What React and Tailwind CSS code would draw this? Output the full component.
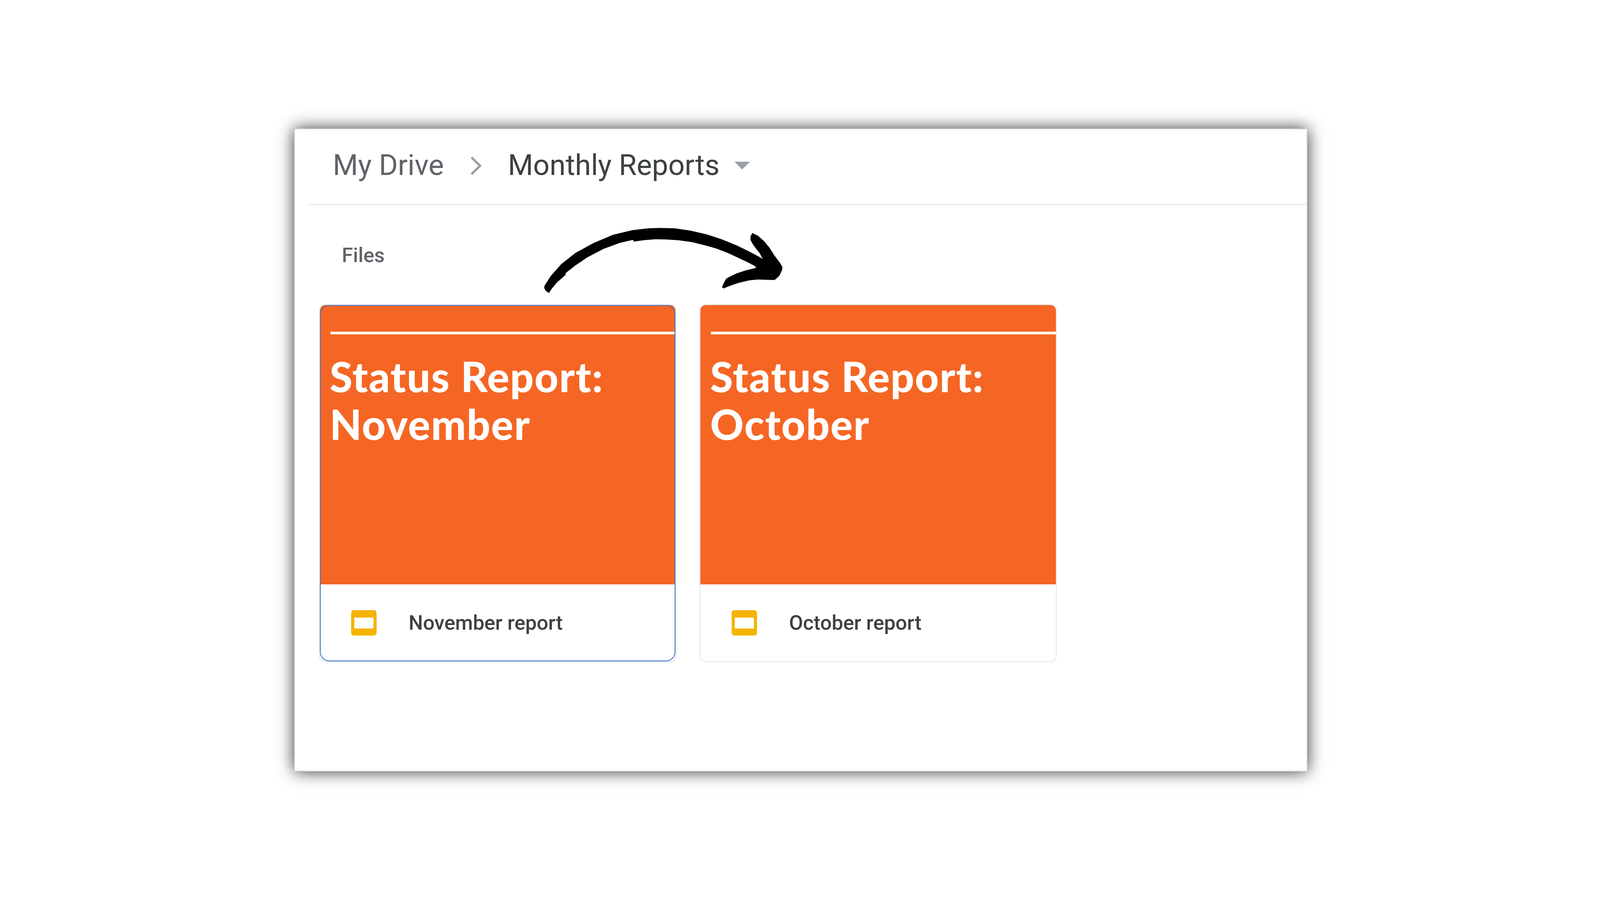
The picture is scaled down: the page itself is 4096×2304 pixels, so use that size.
import React from 'react';

const ARROW = "M120 825 L108 810 L100 795 L93 770 L95 745 L130 640 L190 510 L270 390 L370 285 L480 195 L590 145 L680 125 L745 120 L830 125 L920 150 L1010 190 L1090 240 L1180 310 L1250 375 L1318 445 L1327 458 L1310 395 L1285 335 L1270 295 L1258 250 L1257 215 L1268 175 L1300 205 L1335 265 L1365 335 L1395 425 L1425 500 L1438 545 L1435 580 L1420 640 L1405 665 L1395 682 L1380 683 L1300 678 L1250 688 L1190 715 L1140 748 L1105 775 L1097 765 L1100 745 L1110 705 L1118 675 L1130 658 L1180 612 L1230 580 L1285 555 L1290 545 L1275 525 L1245 495 L1190 445 L1130 392 L1065 343 L1000 308 L930 275 L850 253 L780 245 L720 243 L660 252 L596 268 L598 255 L592 250 L520 282 L430 345 L335 440 L270 525 L230 585 L213 612 L215 625 L195 660 L165 710 L135 780 Z";

function ReportCard({ month, name, selected }) {
  return (
    <div className="relative w-[914px] h-[916px] rounded-[16px] overflow-hidden bg-white border-2 border-[#e3e5e8] flex flex-col">
      <div className="h-[715px] bg-[#f56624] pt-[68px] pl-[27px] shrink-0">
        <div className="h-[7px] bg-[#fff3ec]"></div>
        <div className="mt-[46px] -ml-[2px] font-['Lato',sans-serif] font-black text-[106px] leading-[122px] tracking-[2px] text-white">
          <div>Status Report:</div>
          <div>{month}</div>
        </div>
      </div>
      <div className="flex-1 flex items-center pl-[80px]">
        <div className="w-[65px] h-[65px] rounded-[7px] bg-[#f4b400] flex items-center justify-center shrink-0">
          <div className="w-[49px] h-[28px] bg-white"></div>
        </div>
        <span className="ml-[82px] font-['Roboto',sans-serif] font-medium text-[52px] text-[#3c4043]">{name}</span>
      </div>
      {selected && <div className="absolute inset-0 rounded-[24px] border-2 border-[#3b6fc9]"></div>}
    </div>
  );
}

export default function App() {
  return (
    <div className="w-full h-[2304px] bg-white flex items-start justify-start pt-[329px] pl-[753px]">
      <div className="relative w-[2594px] h-[1646px] bg-white border-2 border-[#d2d2d2] shadow-[0_0_40px_rgba(0,0,0,0.8)]">
        <div className="ml-[32px] h-[194px] border-b-2 border-[#e3e5e8] flex items-center pl-[65px] pb-[6px] font-['Roboto',sans-serif] text-[74px]">
          <span className="mb-[4px] text-[#5f6368]">My Drive</span>
          <svg className="ml-[67px] w-[30px] h-[47px]" viewBox="0 0 30 47" fill="none">
            <path d="M4 2 L26 23.5 L4 45" stroke="#9aa0a6" strokeWidth="6" />
          </svg>
          <span className="mb-[4px] ml-[67px] text-[#3c4043]">Monthly Reports</span>
          <svg className="ml-[38px] w-[40px] h-[20px]" viewBox="0 0 40 20">
            <path d="M0 0 H40 L20 20 Z" fill="#9aa0a6" />
          </svg>
        </div>
        <div className="pl-[120px] pt-[93px] font-['Roboto',sans-serif] font-medium text-[52px] leading-[72px] text-[#5f6368]">Files</div>
        <div className="flex gap-[60px] pl-[62px] mt-[89px]">
          <ReportCard month="November" name="November report" selected />
          <ReportCard month="October" name="October report" />
        </div>
        <svg className="absolute left-[596px] top-[224px] w-[711px] h-[284px]" viewBox="0 0 1568 1200" preserveAspectRatio="none">
          <path d={ARROW} fill="#000" />
        </svg>
      </div>
    </div>
  );
}
